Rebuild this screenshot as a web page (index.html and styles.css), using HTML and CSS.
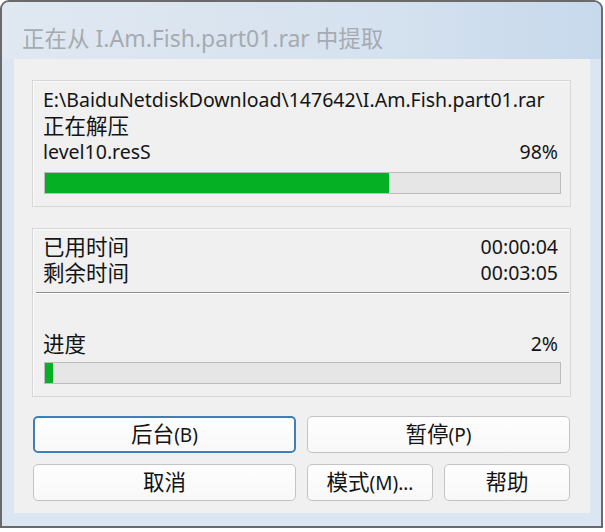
FILE: index.html
```html
<!DOCTYPE html>
<html lang="zh-CN">
<head>
<meta charset="utf-8">
<title>正在从 I.Am.Fish.part01.rar 中提取</title>
<link rel="stylesheet" href="styles.css">
</head>
<body>
<div class="window">
  <div class="titlebar"><span class="zh">正在从</span> I.Am.Fish.part01.rar <span class="zh">中提取</span></div>
  <div class="content">
    <div class="group group-file">
      <div class="row">E:\BaiduNetdiskDownload\147642\I.Am.Fish.part01.rar</div>
      <div class="row"><span class="zh">正在解压</span></div>
      <div class="row split"><span>level10.resS</span><span>98%</span></div>
      <div class="bar"><div class="fill" style="width: 66.8%"></div></div>
    </div>
    <div class="group group-total">
      <div class="row split"><span class="zh">已用时间</span><span>00:00:04</span></div>
      <div class="row split"><span class="zh">剩余时间</span><span>00:03:05</span></div>
      <div class="separator"></div>
      <div class="row split"><span class="zh">进度</span><span>2%</span></div>
      <div class="bar"><div class="fill" style="width: 1.6%"></div></div>
    </div>
    <div class="buttons">
      <button class="btn btn-half btn-default"><span class="zh">后台</span>(B)</button>
      <button class="btn btn-half"><span class="zh">暂停</span>(P)</button>
      <button class="btn btn-half"><span class="zh">取消</span></button>
      <button class="btn"><span class="zh">模式</span>(M)...</button>
      <button class="btn"><span class="zh">帮助</span></button>
    </div>
  </div>
</div>
</body>
</html>
```

FILE: styles.css
```css
html, body {
  margin: 0;
  padding: 0;
  background: #ffffff;
}

body {
  font-family: "Noto Sans", "Noto Sans CJK SC", sans-serif;
  color: #141414;
}

.zh {
  font-family: "Noto Sans CJK SC", sans-serif;
  font-size: 21.5px;
  line-height: 1;
  position: relative;
  top: 1px;
}

.window {
  width: 599px;
  height: 524px;
  border: 2px solid #6a6a6a;
  border-radius: 9px 9px 0 0;
  background: #dbe6f2;
  display: flex;
  flex-direction: column;
}

.titlebar {
  height: 34px;
  padding: 19px 0 4px 20px;
  line-height: 34px;
  font-size: 23px;
  color: #a6abb1;
  border-radius: 7px 7px 0 0;
  background: linear-gradient(90deg, #e0e8f1 0%, #d6e2ef 60%, #c7d9ec 100%);
  white-space: nowrap;
}

.titlebar .zh {
  font-size: 22.5px;
  top: 0;
}

.content {
  margin: 0 11px 0 12px;
  padding: 21px 19px 12px 18px;
  background: #f0f0f0;
  display: flex;
  flex-direction: column;
}

.group {
  border: 1px solid #d6d6d6;
  box-shadow: inset 1px 1px 0 #fbfbfb;
  padding: 6px 9px 12px 10px;
}

.group-total {
  margin-top: 21px;
  padding-top: 5px;
}

.row {
  height: 26px;
  line-height: 26px;
  font-size: 19.5px;
  white-space: nowrap;
}

.split {
  display: flex;
  justify-content: space-between;
  align-items: baseline;
  padding-right: 3px;
}

.bar {
  margin: 7px 0 0 1px;
  height: 20px;
  border: 1px solid #bcbcbc;
  background: #e6e6e6;
}

.group-total .bar {
  margin-top: 5px;
}

.fill {
  height: 100%;
  background: #06b025;
}

.separator {
  margin: 6px -8px 37px -7px;
  height: 1px;
  border-bottom: 1px solid #ffffff;
  background: #8f8f8f;
}

.buttons {
  margin: 19px 1px 0 1px;
  display: grid;
  grid-template-columns: repeat(4, 1fr);
  grid-auto-rows: 37px;
  column-gap: 11px;
  row-gap: 11px;
}

.btn {
  font-family: "Noto Sans", "Noto Sans CJK SC", sans-serif;
  font-size: 19px;
  line-height: 26px;
  color: #141414;
  border: 1px solid #c4c4c4;
  border-radius: 5px;
  background: linear-gradient(180deg, #fefefe 0%, #f8f8f8 100%);
  padding: 0;
}

.btn .zh {
  top: 0;
}

.btn-half {
  grid-column: span 2;
}

.btn-default {
  border: 2px solid #3f7fb6;
  box-shadow: inset 0 0 0 1px #ffffff;
}
```
